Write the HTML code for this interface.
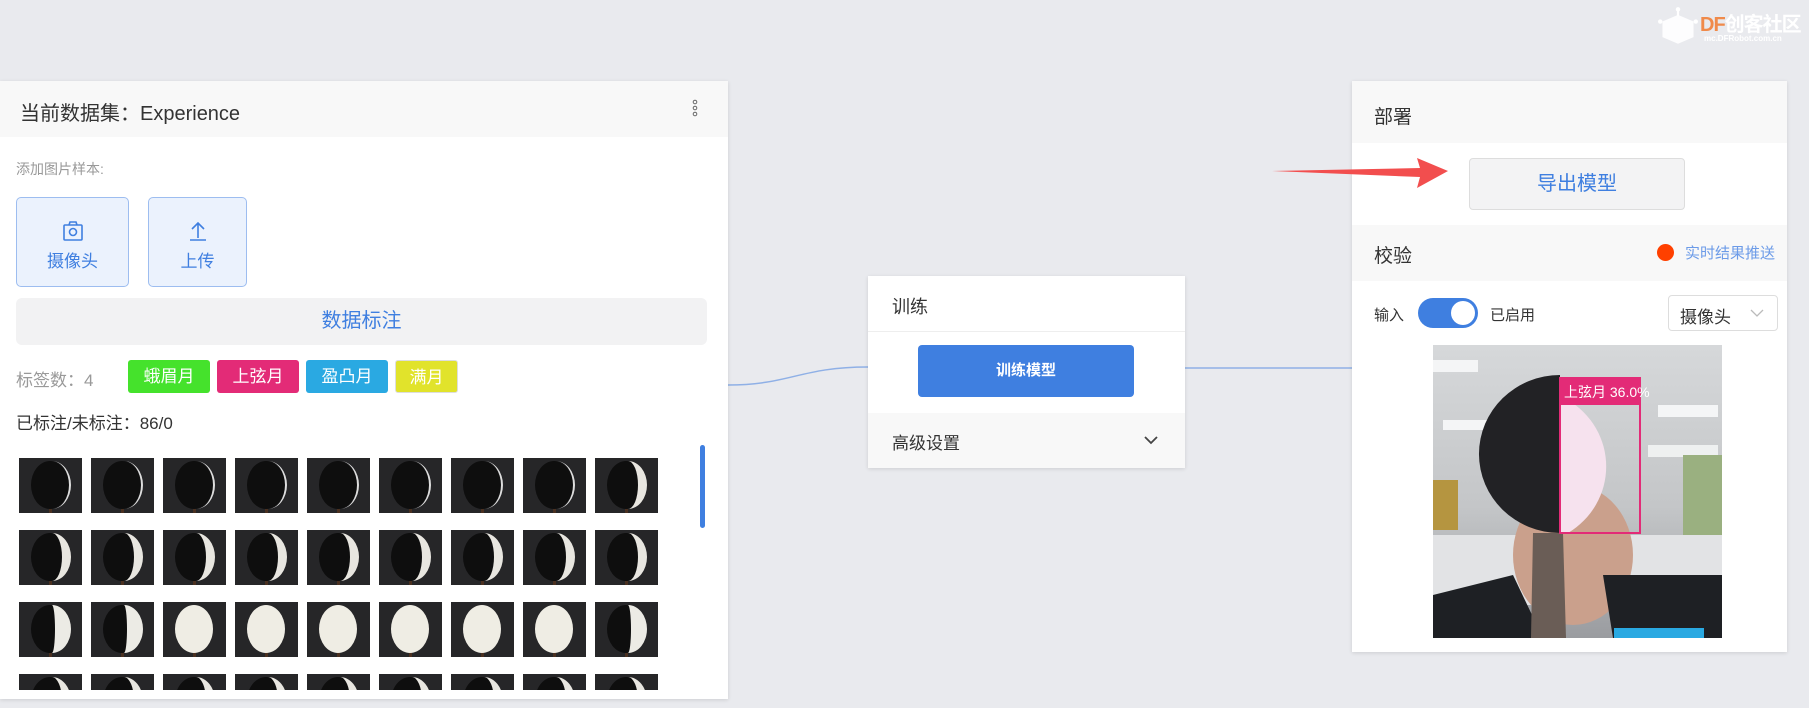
<!DOCTYPE html>
<html><head><meta charset="utf-8"><style>
*{box-sizing:border-box;margin:0;padding:0}
body{width:1809px;height:708px;background:#e9eaee;position:relative;overflow:hidden;font-family:"Liberation Sans","Noto Sans CJK SC",sans-serif;color:#333}
.a{position:absolute}
.panel{background:#fff;box-shadow:0 1px 4px rgba(0,0,0,.12)}
.hd{background:#f8f8f8}
.tag{position:absolute;top:360px;height:33px;border-radius:3px;color:#fff;font-size:17px;line-height:33px;text-align:center}
</style></head><body>

<!-- logo -->
<div class="a" style="left:1658px;top:6px;width:40px;height:40px">
<svg width="40" height="40" viewBox="0 0 36 36"><circle cx="18" cy="3" r="2" fill="#fff"/><rect x="17" y="3" width="2" height="6" fill="#fff"/><path d="M4 14 L18 8 L32 14 L32 28 L18 34 L4 28Z" fill="#fff" opacity=".9"/><circle cx="2" cy="14" r="2" fill="#fff"/><circle cx="34" cy="14" r="2" fill="#fff"/></svg></div>
<div class="a" style="left:1700px;top:8px;font-size:20px;font-weight:bold;color:#f08a4a;letter-spacing:-1px;white-space:nowrap">DF<span style="color:#fff">创客社区</span></div>
<div class="a" style="left:1704px;top:34px;font-size:8px;color:#fff;font-weight:bold;white-space:nowrap">mc.DFRobot.com.cn</div>

<!-- connectors -->
<svg class="a" style="left:0;top:0" width="1809" height="708"><path d="M728 385 C790 385 800 367 868 367" stroke="#8fb0e6" stroke-width="1.5" fill="none"/><path d="M1185 368 L1352 368" stroke="#8fb0e6" stroke-width="1.5" fill="none"/></svg>

<!-- left panel -->
<div class="a panel" style="left:0;top:81px;width:728px;height:618px;overflow:hidden">
 <div class="hd a" style="left:0;top:0;width:728px;height:56px;"></div>
 <div class="a" style="left:20px;top:16px;font-size:20px;color:#333">当前数据集：Experience</div>
 <div class="a" style="left:692px;top:18px;width:6px;height:20px"><svg width="6" height="20"><circle cx="3" cy="3" r="1.8" fill="none" stroke="#666"/><circle cx="3" cy="9" r="1.8" fill="none" stroke="#666"/><circle cx="3" cy="15" r="1.8" fill="none" stroke="#666"/></svg></div>
 <div class="a" style="left:16px;top:78px;font-size:14px;color:#999">添加图片样本:</div>
 <div class="a" style="left:16px;top:116px;width:113px;height:90px;background:#ebf2fd;border:1px solid #9dbdf0;border-radius:5px;text-align:center;color:#3f7fe0;font-size:17px">
  <svg style="margin-top:22px" width="22" height="22" viewBox="0 0 22 22"><rect x="2" y="5" width="18" height="15" rx="1" fill="none" stroke="#3f7fe0" stroke-width="1.6"/><path d="M7 5 L8 2 L14 2 L15 5" fill="none" stroke="#3f7fe0" stroke-width="1.6"/><circle cx="11" cy="12" r="3.5" fill="none" stroke="#3f7fe0" stroke-width="1.6"/></svg>
  <div>摄像头</div></div>
 <div class="a" style="left:148px;top:116px;width:99px;height:90px;background:#ebf2fd;border:1px solid #9dbdf0;border-radius:5px;text-align:center;color:#3f7fe0;font-size:17px">
  <svg style="margin-top:22px" width="22" height="22" viewBox="0 0 22 22"><path d="M11 18 L11 3 M5 9 L11 3 L17 9 M3 20 L19 20" fill="none" stroke="#3f7fe0" stroke-width="1.6"/></svg>
  <div>上传</div></div>
 <div class="a" style="left:16px;top:217px;width:691px;height:47px;background:#f2f2f3;border-radius:6px;text-align:center;line-height:47px;color:#3f7fe0;font-size:20px">数据标注</div>
 <div class="a" style="left:16px;top:285px;font-size:17px;color:#999">标签数：4</div>
</div>
<div class="tag" style="left:128px;width:82px;background:#45e22c">蛾眉月</div>
<div class="tag" style="left:217px;width:82px;background:#e32b77">上弦月</div>
<div class="tag" style="left:306px;width:82px;background:#2aa9e2">盈凸月</div>
<div class="tag" style="left:395px;width:63px;background:#e1e32b;border:1px solid #ddd">满月</div>
<div class="a" style="left:16px;top:409px;font-size:17px;color:#333">已标注/未标注：86/0</div>
<div class="a" style="left:700px;top:445px;width:5px;height:83px;background:#3f7fe0;border-radius:3px"></div>
<div class="a" style="left:0;top:440px;width:728px;height:250px;overflow:hidden">
<svg width="728" height="250">
<defs>
<g id="c1"><rect width="63" height="55" fill="#262628"/><ellipse cx="31" cy="27" rx="19" ry="24" fill="#0e0e0e"/><path d="M33 3 A19 24 0 0 1 33 51 A17 24 0 0 0 33 3Z" fill="#ddd"/><rect x="30" y="51" width="3" height="4" fill="#4a3020"/></g>
<g id="c2"><rect width="63" height="55" fill="#262628"/><ellipse cx="31" cy="27" rx="19" ry="24" fill="#0e0e0e"/><path d="M33 3 A19 24 0 0 1 33 51 A10 24 0 0 0 33 3Z" fill="#e8e6e0"/><rect x="30" y="51" width="3" height="4" fill="#4a3020"/></g>
<g id="c3"><rect width="63" height="55" fill="#262628"/><ellipse cx="31" cy="27" rx="19" ry="24" fill="#0e0e0e"/><path d="M33 3 A19 24 0 0 1 33 51 A3 24 0 0 0 33 3Z" fill="#ecebe5"/><rect x="30" y="51" width="3" height="4" fill="#4a3020"/></g>
<g id="c4"><rect width="63" height="55" fill="#262628"/><ellipse cx="31" cy="27" rx="19" ry="24" fill="#efede4"/><rect x="30" y="51" width="3" height="4" fill="#4a3020"/></g>
</defs>
<use href="#c1" x="19" y="18"/><use href="#c1" x="91" y="18"/><use href="#c1" x="163" y="18"/><use href="#c1" x="235" y="18"/><use href="#c1" x="307" y="18"/><use href="#c1" x="379" y="18"/><use href="#c1" x="451" y="18"/><use href="#c1" x="523" y="18"/><use href="#c2" x="595" y="18"/>
<use href="#c2" x="19" y="90"/><use href="#c2" x="91" y="90"/><use href="#c2" x="163" y="90"/><use href="#c2" x="235" y="90"/><use href="#c2" x="307" y="90"/><use href="#c2" x="379" y="90"/><use href="#c2" x="451" y="90"/><use href="#c2" x="523" y="90"/><use href="#c2" x="595" y="90"/>
<use href="#c3" x="19" y="162"/><use href="#c3" x="91" y="162"/><use href="#c4" x="163" y="162"/><use href="#c4" x="235" y="162"/><use href="#c4" x="307" y="162"/><use href="#c4" x="379" y="162"/><use href="#c4" x="451" y="162"/><use href="#c4" x="523" y="162"/><use href="#c3" x="595" y="162"/>
<use href="#c2" x="19" y="234"/><use href="#c2" x="91" y="234"/><use href="#c2" x="163" y="234"/><use href="#c2" x="235" y="234"/><use href="#c2" x="307" y="234"/><use href="#c2" x="379" y="234"/><use href="#c2" x="451" y="234"/><use href="#c2" x="523" y="234"/><use href="#c2" x="595" y="234"/>
</svg></div>

<!-- middle panel -->
<div class="a panel" style="left:868px;top:276px;width:317px;height:192px">
 <div class="a" style="left:24px;top:17px;font-size:18px;color:#333">训练</div>
 <div class="a" style="left:0;top:55px;width:317px;border-top:1px solid #eee"></div>
 <div class="a" style="left:50px;top:69px;width:216px;height:52px;background:#3f7fe0;border-radius:4px;color:#fff;font-size:15px;font-weight:bold;text-align:center;line-height:52px">训练模型</div>
 <div class="a hd" style="left:0;top:137px;width:317px;height:55px"></div>
 <div class="a" style="left:24px;top:153px;font-size:17px;color:#333">高级设置</div>
 <svg class="a" style="left:275px;top:158px" width="16" height="12"><path d="M2 3 L8 9 L14 3" fill="none" stroke="#444" stroke-width="1.8"/></svg>
</div>

<!-- right panel -->
<div class="a panel" style="left:1352px;top:81px;width:435px;height:571px">
 <div class="a hd" style="left:0;top:0;width:435px;height:62px"></div>
 <div class="a" style="left:22px;top:21px;font-size:19px;color:#333">部署</div>
 <div class="a" style="left:117px;top:77px;width:216px;height:52px;background:#f3f3f4;border:1px solid #ddd;border-radius:4px;text-align:center;line-height:50px;color:#3f7fe0;font-size:20px">导出模型</div>
 <div class="a hd" style="left:0;top:144px;width:435px;height:56px"></div>
 <div class="a" style="left:22px;top:160px;font-size:19px;color:#333">校验</div>
 <div class="a" style="left:305px;top:163px;width:17px;height:17px;border-radius:50%;background:#ff4000"></div>
 <div class="a" style="left:333px;top:161px;font-size:15px;color:#6c9be8">实时结果推送</div>
 <div class="a" style="left:22px;top:223px;font-size:15px;color:#333">输入</div>
 <div class="a" style="left:66px;top:217px;width:60px;height:30px;border-radius:15px;background:#3f7fe0"><div style="position:absolute;right:3px;top:3px;width:24px;height:24px;border-radius:50%;background:#fff"></div></div>
 <div class="a" style="left:138px;top:223px;font-size:15px;color:#333">已启用</div>
 <div class="a" style="left:316px;top:214px;width:110px;height:36px;border:1px solid #ddd;border-radius:4px"><span style="position:absolute;left:11px;top:7px;font-size:17px">摄像头</span><svg style="position:absolute;left:80px;top:12px" width="16" height="10"><path d="M2 2 L8 8 L14 2" fill="none" stroke="#bbb" stroke-width="1.3"/></svg></div>
</div>
<svg class="a" style="left:1433px;top:345px" width="289" height="293" viewBox="0 0 289 293">
 <defs><linearGradient id="bg" x1="0" y1="0" x2="0" y2="1"><stop offset="0" stop-color="#d6d8da"/><stop offset=".55" stop-color="#c4c6c8"/><stop offset="1" stop-color="#9a9ca0"/></linearGradient></defs>
 <rect width="289" height="293" fill="url(#bg)"/>
 <rect x="0" y="15" width="45" height="12" fill="#f4f5f6"/><rect x="10" y="75" width="45" height="10" fill="#f4f5f6"/><rect x="225" y="60" width="60" height="12" fill="#f4f5f6"/><rect x="215" y="100" width="70" height="12" fill="#eef0f0"/>
 <rect x="0" y="190" width="289" height="70" fill="#e2e3e5"/><rect x="250" y="110" width="39" height="80" fill="#9ab080"/>
 <rect x="0" y="135" width="25" height="50" fill="#b59540"/>
 <ellipse cx="140" cy="210" rx="60" ry="70" fill="#caa08c"/>
 <path d="M0 250 L80 230 L110 293 L0 293Z M170 230 L289 230 L289 293 L180 293Z" fill="#1e2024"/>
 <path d="M127 30 A80 78 0 0 0 127 188Z" fill="#222225"/>
 <path d="M127 55 L135 55 A80 78 0 0 1 135 188 L127 188Z" fill="#f6e2ee"/>
 <path d="M100 188 L130 188 L133 293 L98 293Z" fill="#6a5d56"/>
 <rect x="127" y="33" width="80" height="155" fill="none" stroke="#e32b77" stroke-width="2"/>
 <rect x="126" y="32" width="82" height="28" fill="#e32b77"/>
 <text x="131" y="52" font-size="14" fill="#fff" font-family="Liberation Sans,Noto Sans CJK SC,sans-serif">上弦月 36.0%</text>
 <rect x="181" y="283" width="90" height="10" fill="#2aa9e2"/>
</svg>

<!-- arrow on top -->
<svg class="a" style="left:0;top:0;z-index:5" width="1809" height="708"><path d="M1272 171 L1420 168 L1417 158 L1448 171 L1417 188 L1420 177 Z" fill="#f24e4e"/></svg>
</body></html>
